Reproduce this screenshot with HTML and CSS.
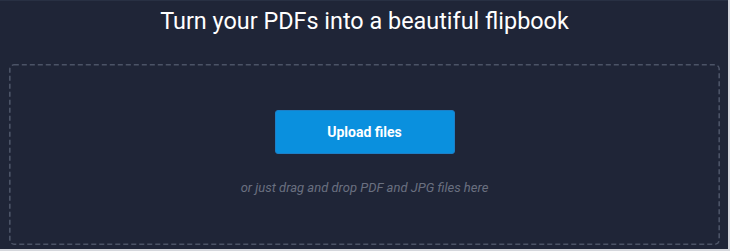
FILE: index.html
```html
<!DOCTYPE html>
<html lang="en">
<head>
<meta charset="utf-8">
<title>Flipbook upload</title>
<link rel="stylesheet" href="styles.css">
</head>
<body>
<main class="panel">
  <h1 class="title">Turn your PDFs into a beautiful flipbook</h1>
  <section class="dropzone">
    <button class="upload-btn" type="button">Upload files</button>
    <p class="hint">or just drag and drop PDF and JPG files here</p>
  </section>
</main>
</body>
</html>
```
FILE: styles.css
```css
html, body {
  margin: 0;
  padding: 0;
}
body {
  background: #d6d8dd;
  font-family: Roboto, "Noto Sans", "Liberation Sans", sans-serif;
  width: 730px;
  height: 251px;
  overflow: hidden;
}
.panel {
  box-sizing: border-box;
  width: 728px;
  height: 249px;
  background: #1f2537;
  border-top: 1px solid #283043;
  padding: 0 8px 0 9px;
  display: flex;
  flex-direction: column;
}
.title {
  margin: 6px 0 0;
  font-size: 23.4px;
  line-height: 28px;
  font-weight: 400;
  color: #ffffff;
  text-align: center;
}
.dropzone {
  margin-top: 29px;
  height: 181px;
  box-sizing: border-box;
  border-radius: 5px;
  background-image: url("data:image/svg+xml,%3Csvg xmlns='http://www.w3.org/2000/svg' width='100%25' height='100%25'%3E%3Crect x='0.8' y='0.8' width='calc(100%25 - 1.6px)' height='calc(100%25 - 1.6px)' rx='4' ry='4' fill='none' stroke='%234b5366' stroke-width='1.6' stroke-dasharray='5 3'/%3E%3C/svg%3E");
  display: flex;
  flex-direction: column;
  align-items: center;
  padding-top: 46px;
}
.upload-btn {
  width: 180px;
  height: 44px;
  border: 1px solid #1d7fc6;
  border-radius: 3px;
  background: #0a90de;
  color: #ffffff;
  font-family: inherit;
  font-size: 14px;
  font-weight: 700;
  cursor: pointer;
}
.hint {
  margin: 26px 0 0;
  font-size: 13px;
  line-height: 16px;
  font-style: italic;
  color: #6a7080;
}
```
